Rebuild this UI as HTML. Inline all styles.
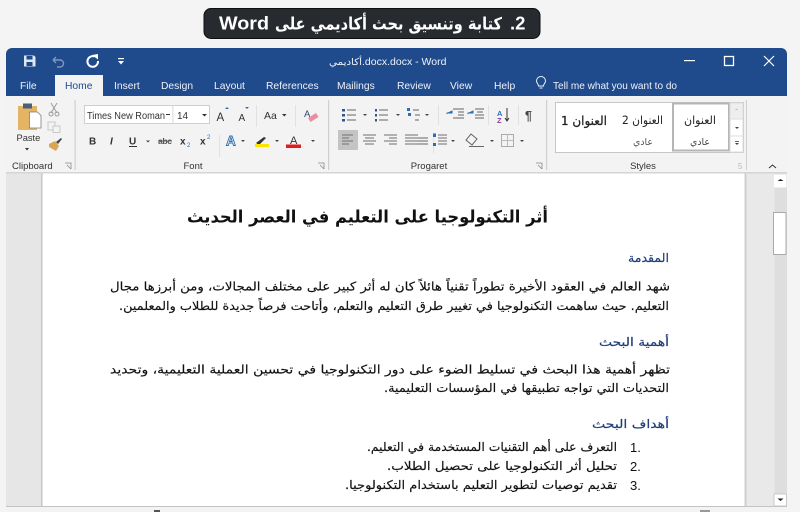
<!DOCTYPE html>
<html lang="ar"><head><meta charset="utf-8"><style>
html,body{margin:0;padding:0;background:#f4f4f4;width:800px;height:512px;overflow:hidden}
svg{display:block}
text{font-family:"Liberation Sans",sans-serif}
.ar{font-family:"DejaVu Sans","Liberation Sans",sans-serif}
.s{font-family:"Liberation Serif","DejaVu Sans",serif}
</style></head><body>
<svg width="800" height="512" viewBox="0 0 800 512" xmlns="http://www.w3.org/2000/svg">
<rect width="800" height="512" fill="#f4f4f4"/>
<!-- banner -->
<rect x="204" y="8.500" width="336" height="30" rx="7" fill="#272b30" stroke="#0c0e10"/>
<text x="219" y="29.500" font-size="18.500" font-weight="700" fill="#fff" textLength="50" lengthAdjust="spacingAndGlyphs">Word</text>
<text class="ar" x="502" y="29.500" font-size="17" font-weight="700" fill="#fff" textLength="227" lengthAdjust="spacingAndGlyphs" direction="rtl">كتابة وتنسيق بحث أكاديمي على</text>
<text x="510" y="29.500" font-size="18.500" font-weight="700" fill="#fff" direction="ltr" unicode-bidi="bidi-override">.2</text>
<!-- window -->
<path d="M6 96V54a6 6 0 0 1 6-6H781a6 6 0 0 1 6 6V96Z" fill="#1f4a8c"/>
<rect x="6" y="96" width="781" height="416" fill="#f3f3f3"/>
<!-- QAT -->
<path d="M24 55.500h10l1.500 1.500v9.500H24Z" fill="#dfe7f2"/><rect x="26.500" y="56" width="6" height="3.500" fill="#1f4a8c"/><rect x="26.500" y="62" width="6" height="4" fill="#1f4a8c"/>
<path d="M53 60h7a3.500 3.500 0 0 1 0 7h-3M53 60l3-3M53 60l3 3" fill="none" stroke="#7e98bf" stroke-width="1.400"/>
<path d="M94.500 56.500a5.300 5.300 0 1 0 3.500 4.500" fill="none" stroke="#fff" stroke-width="2"/><path d="M92 55l6-1v5.500Z" fill="#fff"/>
<rect x="118" y="58" width="6" height="1.200" fill="#fff"/><path d="M118 61h6l-3 3.500Z" fill="#fff"/>
<!-- title -->
<text class="ar" x="362" y="65" font-size="9.500" fill="#eef2f8" textLength="33" lengthAdjust="spacingAndGlyphs" direction="rtl">أكاديمي</text>
<text x="362" y="65" font-size="10.500" fill="#eef2f8">.docx.docx - Word</text>
<!-- window buttons -->
<rect x="684" y="60" width="11" height="1.200" fill="#fff"/>
<rect x="724.500" y="56.500" width="9" height="9" fill="none" stroke="#fff" stroke-width="1.300"/>
<path d="M764 56l10 10M774 56l-10 10" stroke="#fff" stroke-width="1.200"/>
<!-- tabs -->
<rect x="55" y="75" width="48" height="22" fill="#f3f3f3"/>
<g font-size="10.300" fill="#eef2f8">
<text x="20" y="89">File</text>
<text x="65" y="89" fill="#1f4a8c">Home</text>
<text x="114" y="89">Insert</text>
<text x="161" y="89">Design</text>
<text x="214" y="89">Layout</text>
<text x="266" y="89">References</text>
<text x="337" y="89">Mailings</text>
<text x="397" y="89">Review</text>
<text x="450" y="89">View</text>
<text x="494" y="89">Help</text>
<text x="553" y="89" textLength="124" lengthAdjust="spacingAndGlyphs">Tell me what you want to do</text>
</g>
<path d="M541 91h3M538 84a3.800 3.800 0 1 1 9 0c0 2-2 3-2 5h-5c0-2-2-3-2-5Z" transform="translate(-1.500 -3)" fill="none" stroke="#eef2f8" stroke-width="1"/>
<!-- ribbon separators -->
<rect x="6" y="172" width="781" height="1.500" fill="#d5d5d5"/>
<g fill="#cfcfcf">
<rect x="74.500" y="100" width="1.200" height="70"/>
<rect x="328" y="100" width="1.200" height="70"/>
<rect x="546" y="100" width="1.200" height="70"/>
<rect x="746" y="100" width="1" height="70"/>
<rect x="256" y="105" width="1" height="22" fill="#e1e1e1"/><rect x="295" y="105" width="1" height="22" fill="#e1e1e1"/>
<rect x="219" y="135" width="1" height="22" fill="#e1e1e1"/>
<rect x="438" y="105" width="1" height="20" fill="#e1e1e1"/><rect x="488" y="105" width="1" height="20" fill="#e1e1e1"/><rect x="518" y="105" width="1" height="20" fill="#e1e1e1"/>
<rect x="433" y="133" width="1" height="20" fill="#e1e1e1"/>
</g>
<!-- clipboard -->
<rect x="18" y="106" width="19" height="24" fill="#e2b463"/><rect x="23" y="103.500" width="9" height="5" fill="#4a5f7a"/>
<path d="M29.500 112h8l3.500 3.500V128H29.500Z" fill="#fff" stroke="#7f7f7f" stroke-width=".8"/>
<path d="M51 103l6 10M57 103l-6 10" stroke="#9a9a9a" stroke-width="1" fill="none"/><circle cx="51" cy="114" r="2" fill="none" stroke="#9a9a9a"/><circle cx="57" cy="114" r="2" fill="none" stroke="#9a9a9a"/>
<rect x="48" y="122" width="7" height="8" fill="none" stroke="#c8c8c8"/><rect x="53" y="126" width="7" height="6.500" fill="#f3f3f3" stroke="#c8c8c8"/>
<path d="M49 144l6-3 4 5-3 5-7-4Z" fill="#dba552"/><path d="M56 142l5-4 1 1-4 5Z" fill="#444"/>
<text x="16.500" y="141" font-size="9.300" fill="#333">Paste</text>
<path d="M25 148h4l-2 2.500Z" fill="#333"/>
<text x="12" y="169" font-size="9.500" fill="#333">Clipboard</text>
<path d="M65 163h6v6M67 165l4 4" fill="none" stroke="#888" stroke-width=".8"/>
<!-- font boxes -->
<rect x="84.500" y="105.500" width="125" height="18" fill="#fff" stroke="#cfcfcf"/>
<rect x="172.500" y="105.500" width=".8" height="18" fill="#cfcfcf"/>
<text x="87" y="119" font-size="9.800" fill="#333" textLength="78" lengthAdjust="spacingAndGlyphs">Times New Roman</text>
<rect x="166" y="114" width="4" height="1" fill="#333"/>
<text x="177" y="119" font-size="10" fill="#333">14</text>
<path d="M202 114h5l-2.500 2.500Z" fill="#333"/>
<text x="216.500" y="121" font-size="11.500" fill="#333">A</text><path d="M225 109l2-2 2 2Z" fill="#2a6fb5"/>
<text x="238.500" y="121" font-size="10" fill="#333">A</text><path d="M245 107h4l-2 2Z" fill="#2a6fb5"/>
<text x="264" y="119" font-size="10.500" fill="#333">Aa</text><path d="M282 114h4.500l-2.200 2.500Z" fill="#333"/>
<text x="304" y="117" font-size="9.500" fill="#33456b">A</text><path d="M308 118l8-5 2.500 4-8 5Z" fill="#ec8e9c"/>
<!-- row 2 -->
<g font-size="10" fill="#333">
<text x="89" y="144.500" font-weight="700">B</text>
<text x="110" y="144.500" font-style="italic" font-family="Liberation Serif" font-weight="700">I</text>
<text x="129" y="144.500" font-weight="700">U</text><rect x="129" y="146" width="8" height="1" fill="#333"/>
<text x="158" y="144" font-size="8.500" font-weight="700" fill="#555" textLength="14">abc</text><rect x="158" y="140.500" width="14" height=".9" fill="#555"/>
<text x="180" y="144.500" font-weight="700">x</text><text x="187" y="147" font-size="6" fill="#2a6fb5">2</text>
<text x="200" y="144.500" font-weight="700">x</text><text x="207" y="139" font-size="6" fill="#2a6fb5">2</text>
</g>
<path d="M146 140.500h4l-2 2Z M241 140h4l-2 2Z M275 140h4l-2 2Z M311 140h4l-2 2Z" fill="#444"/>
<text x="226" y="145.500" font-size="13.500" font-weight="700" fill="none" stroke="#2a6fb5" stroke-width=".9">A</text>
<path d="M256 143l8-6 2 1-7 7Z" fill="#333"/><rect x="255" y="144" width="14" height="3" fill="#fbe400"/>
<text x="290" y="144" font-size="11" fill="#333">A</text><rect x="286" y="144.500" width="15" height="3.500" fill="#e51a1a"/>
<text x="193" y="169" font-size="9.500" fill="#333" text-anchor="middle">Font</text>
<path d="M318 163h6v6M320 165l4 4" fill="none" stroke="#888" stroke-width=".8"/>
<!-- paragraph group -->
<g fill="#33558a"><rect x="342" y="109" width="3" height="2.500"/><rect x="342" y="114" width="3" height="2.500"/><rect x="342" y="119" width="3" height="2.500"/>
<rect x="375" y="109" width="2" height="2.500"/><rect x="375" y="114" width="2" height="2.500"/><rect x="375" y="119" width="2" height="2.500"/></g>
<g stroke="#666" stroke-width="1" fill="none">
<path d="M347 110h9M347 115h9M347 120h9M379 110h9M379 115h9M379 120h9M413 110h6M415 115h5M415 120h4"/>
<path d="M453 109h11M458 112h6M458 115h6M453 118h11M475 109h9M477 112h6M475 115h9M475 118h9"/>
<path d="M415 138h13M415 141h13M415 144h13"/>
</g>
<path d="M363 114h4l-2 2Z M396 114h4l-2 2Z M425 114h4l-2 2Z" fill="#444"/>
<rect x="407" y="108" width="3" height="3" fill="#2a6fb5"/><rect x="408" y="113" width="3" height="3" fill="#2a6fb5"/>
<path d="M447 113h5v-2l-5 2.500ZM468 113h5v-2l-5 2.500Z" fill="#2a6fb5" stroke="#2a6fb5"/>
<text x="497" y="116" font-size="7.500" font-weight="700" fill="#2a6fb5">A</text><text x="497" y="123" font-size="7.500" font-weight="700" fill="#8a3ba0">Z</text>
<path d="M507 108v12M505 118l2 3 2-3" stroke="#333" fill="none"/>
<text x="525" y="120" font-size="12.500" font-weight="700" fill="#444">¶</text>
<rect x="338" y="130" width="20" height="20" fill="#c4c4c4"/>
<g stroke="#6f6f6f" stroke-width="1.100" fill="none">
<path d="M342 135h11M342 138h7M342 141h11M342 144h7"/>
<path d="M363 135h13M365 138h9M363 141h13M365 144h9"/>
<path d="M384 135h13M389 138h8M384 141h13M389 144h8"/>
<path d="M405 135h13M405 138h13M405 141h13M405 144h13"/>
<path d="M438 135h9M438 138h9M438 141h9M438 144h9"/>
<path d="M436 134h-3"/>
</g>
<rect x="433" y="134" width="3" height="3" fill="#2a6fb5"/><rect x="433" y="143" width="3" height="3" fill="#2a6fb5"/>
<path d="M451 140h4l-2 2Z M490 140h4l-2 2Z M520 140h4l-2 2Z" fill="#444"/>
<path d="M471 134l6 5-5 6-6-5Z" fill="none" stroke="#666"/><rect x="469" y="146" width="15" height="1" fill="#666"/>
<rect x="501.500" y="134.500" width="12" height="12" fill="none" stroke="#aaa"/><path d="M507.500 134v12M501 140.500h13" stroke="#bbb"/>
<text x="429" y="169" font-size="9.500" fill="#333" text-anchor="middle">Progaret</text>
<path d="M536 163h6v6M538 165l4 4" fill="none" stroke="#888" stroke-width=".8"/>
<!-- styles -->
<rect x="555.500" y="102.500" width="188" height="50" fill="#fff" stroke="#c6c6c6"/>
<rect x="673" y="103.500" width="56" height="47" fill="#fff" stroke="#b5b5b5" stroke-width="2"/>
<rect x="730" y="103" width="13" height="16" fill="#eee" stroke="#ddd"/><rect x="730" y="119" width="13" height="17" fill="#fff" stroke="#ddd"/><rect x="730" y="136" width="13" height="16" fill="#fff" stroke="#ddd"/>
<path d="M735 110h3l-1.500-1.500Z" fill="#bbb"/><path d="M735 127h4l-2 2Z" fill="#444"/><rect x="735" y="141" width="4" height=".8" fill="#444"/><path d="M735 143h4l-2 2Z" fill="#444"/>
<g fill="#222">
<text class="ar" x="716" y="124" font-size="11.500" textLength="32" lengthAdjust="spacingAndGlyphs" direction="rtl">العنوان</text>
<text class="ar" x="710" y="145" font-size="9.500" fill="#444" textLength="20" lengthAdjust="spacingAndGlyphs" direction="rtl">عادي</text>
<text class="ar" x="663" y="124" font-size="11.500" textLength="41" lengthAdjust="spacingAndGlyphs" direction="rtl">العنوان 2</text>
<text class="ar" x="653" y="145" font-size="9.500" fill="#555" textLength="20" lengthAdjust="spacingAndGlyphs" direction="rtl">عادي</text>
<text class="ar" x="607" y="125" font-size="12.500" textLength="46" lengthAdjust="spacingAndGlyphs" direction="rtl" stroke="#222" stroke-width=".25">العنوان 1</text>
</g>
<text x="643" y="169" font-size="9.500" fill="#333" text-anchor="middle">Styles</text>
<text x="738" y="169" font-size="8" fill="#bbb">5</text>
<path d="M769 168l3.500-3 3.500 3" fill="none" stroke="#333" stroke-width="1"/>
<!-- doc area -->
<rect x="6" y="173.500" width="764" height="333" fill="#e6e6e6"/>
<rect x="770" y="173.500" width="18" height="333" fill="#dedede"/>
<rect x="41" y="173.500" width="1.500" height="333" fill="#c5c5c5"/>
<rect x="42.500" y="173.500" width="702" height="333" fill="#fff"/>
<rect x="744.500" y="173.500" width="2" height="333" fill="#cfcfcf"/>
<rect x="746.500" y="173.500" width="28" height="333" fill="#e9e9e9"/>
<rect x="787" y="173" width="13" height="339" fill="#f4f4f4"/>
<rect x="774" y="174.500" width="12.500" height="13" fill="#fff"/><path d="M777.500 181h6l-3-2Z" fill="#222"/>
<rect x="773.500" y="212.500" width="12.500" height="42" fill="#fff" stroke="#aaa"/>
<rect x="774" y="494" width="12.500" height="12" fill="#fff" stroke="#c9c9c9"/><path d="M777.500 498.500h6l-3 2.500Z" fill="#222"/>
<rect x="6" y="506.500" width="781" height="5.500" fill="#f3f3f3"/><rect x="6" y="506" width="781" height="1" fill="#c4c4c4"/>
<rect x="154" y="510" width="6" height="2" fill="#555"/><rect x="700" y="510" width="10" height="2" fill="#999"/>
<!-- doc text -->
<g fill="#111">
<text class="ar" x="548" y="222.500" font-size="17" font-weight="700" textLength="361" lengthAdjust="spacingAndGlyphs" direction="rtl">أثر التكنولوجيا على التعليم في العصر الحديث</text>
<g font-size="12" fill="#1f3d7a" stroke="#1f3d7a" stroke-width=".2">
<text class="ar" x="669" y="262" textLength="41" lengthAdjust="spacingAndGlyphs" direction="rtl">المقدمة</text>
<text class="ar" x="669" y="346" textLength="70" lengthAdjust="spacingAndGlyphs" direction="rtl">أهمية البحث</text>
<text class="ar" x="669" y="428" textLength="77" lengthAdjust="spacingAndGlyphs" direction="rtl">أهداف البحث</text>
</g>
<g font-size="12" stroke="#111" stroke-width=".15">
<text class="ar" x="670" y="290.500" textLength="560" lengthAdjust="spacingAndGlyphs" direction="rtl">شهد العالم في العقود الأخيرة تطوراً تقنياً هائلاً كان له أثر كبير على مختلف المجالات، ومن أبرزها مجال</text>
<text class="ar" x="669" y="310" textLength="550" lengthAdjust="spacingAndGlyphs" direction="rtl">التعليم. حيث ساهمت التكنولوجيا في تغيير طرق التعليم والتعلم، وأتاحت فرصاً جديدة للطلاب والمعلمين.</text>
<text class="ar" x="670" y="373.500" textLength="560" lengthAdjust="spacingAndGlyphs" direction="rtl">تظهر أهمية هذا البحث في تسليط الضوء على دور التكنولوجيا في تحسين العملية التعليمية، وتحديد</text>
<text class="ar" x="669" y="392" textLength="285" lengthAdjust="spacingAndGlyphs" direction="rtl">التحديات التي تواجه تطبيقها في المؤسسات التعليمية.</text>
<text class="ar" x="617" y="451" textLength="250" lengthAdjust="spacingAndGlyphs" direction="rtl">التعرف على أهم التقنيات المستخدمة في التعليم.</text>
<text class="ar" x="617" y="470" textLength="230" lengthAdjust="spacingAndGlyphs" direction="rtl">تحليل أثر التكنولوجيا على تحصيل الطلاب.</text>
<text class="ar" x="617" y="489" textLength="272" lengthAdjust="spacingAndGlyphs" direction="rtl">تقديم توصيات لتطوير التعليم باستخدام التكنولوجيا.</text>
</g>
</g>
<g font-size="13" fill="#111">
<text x="630" y="452">1.</text><text x="630" y="471">2.</text><text x="630" y="490">3.</text>
</g>
</svg>
</body></html>
